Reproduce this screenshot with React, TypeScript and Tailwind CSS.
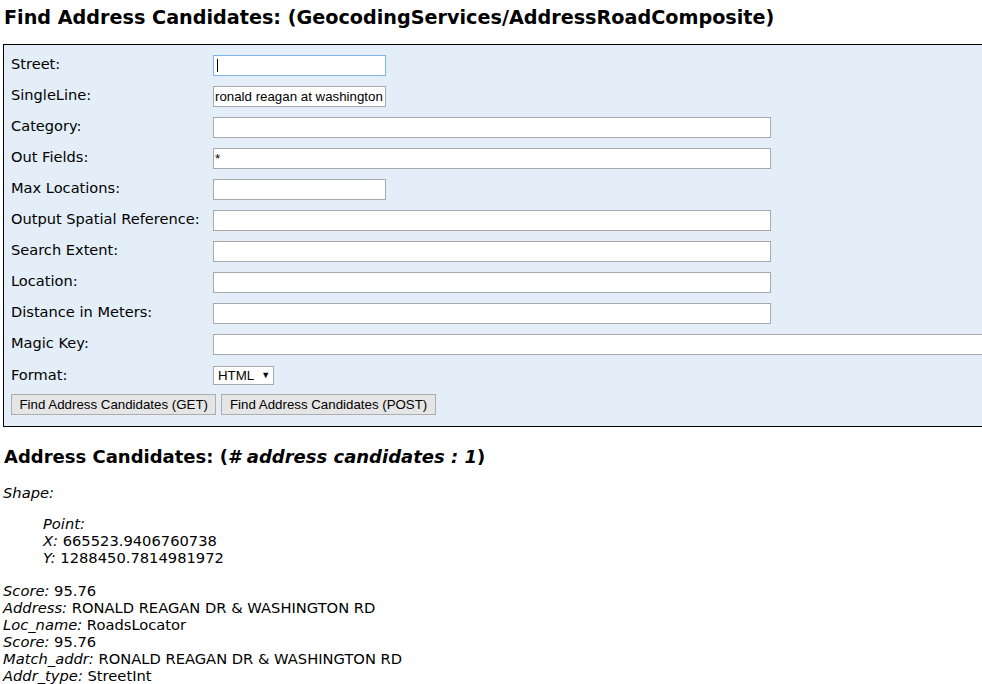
const v = "font-['DejaVu_Sans',Verdana,sans-serif]"
const arial = "font-['Liberation_Sans',Arial,sans-serif]"

type Row = { label: string; value?: string; size: 'short' | 'long' | 'full'; focus?: boolean }

const rows: Row[] = [
  { label: 'Street:', size: 'short', focus: true },
  { label: 'SingleLine:', value: 'ronald reagan at washington', size: 'short' },
  { label: 'Category:', size: 'long' },
  { label: 'Out Fields:', value: '*', size: 'long' },
  { label: 'Max Locations:', size: 'short' },
  { label: 'Output Spatial Reference:', size: 'long' },
  { label: 'Search Extent:', size: 'long' },
  { label: 'Location:', size: 'long' },
  { label: 'Distance in Meters:', size: 'long' },
  { label: 'Magic Key:', size: 'full' },
]

const widths = { short: 'w-[173px]', long: 'w-[558px]', full: 'w-[790px]' }

function Field({ row }: { row: Row }) {
  return (
    <div
      className={`relative h-[21px] ${widths[row.size]} bg-white border ${
        row.focus ? 'border-[#7eb4ea]' : 'border-[#a9a9a9]'
      } ${arial} text-[13.3px] text-black leading-[19px] px-[1px] overflow-hidden whitespace-nowrap`}
    >
      {row.value}
      {row.focus && <span className="absolute left-[3px] top-[3px] w-px h-[13px] bg-black" />}
    </div>
  )
}

export default function App() {
  return (
    <div className={`w-[982px] h-[684px] overflow-hidden bg-white text-black ${v}`}>
      <h2 className="pl-[4px] pt-[6px] text-[19.2px] font-bold leading-[24px]">
        Find Address Candidates: (GeocodingServices/AddressRoadComposite)
      </h2>

      <div className="mt-[14px] ml-[3px] w-[1010px] border border-black bg-[#e3eef8] pt-[5px] pb-[11px] pl-[7px]">
        {rows.map((row) => (
          <div key={row.label} className="flex items-center h-[31px]">
            <div className="w-[202px] text-[14.6px] pb-[3px]">{row.label}</div>
            <Field row={row} />
          </div>
        ))}
        <div className="flex items-center h-[31px]">
          <div className="w-[202px] text-[14.6px] pb-[2px]">Format:</div>
          <div
            className={`h-[19px] w-[61px] bg-white border border-[#a9a9a9] ${arial} text-[13.3px] leading-[17px] pl-[4px] flex items-center gap-[7px]`}
          >
            <span>HTML</span>
            <span className="text-[9px]">▼</span>
          </div>
        </div>
        <div className={`flex gap-[5px] mt-[3px] ${arial} text-[13.3px]`}>
          <div className="h-[21px] px-[7.5px] border border-[#adadad] bg-[#e5e5e5] leading-[19px]">
            Find Address Candidates (GET)
          </div>
          <div className="h-[21px] px-[7.5px] border border-[#adadad] bg-[#e5e5e5] leading-[19px]">
            Find Address Candidates (POST)
          </div>
        </div>
      </div>

      <h2 className="pl-[4px] mt-[18px] text-[18px] font-bold leading-[24px]">
        Address Candidates: (<i># address candidates : 1</i>)
      </h2>

      <div className="pl-[3px] text-[14.7px] leading-[17px]">
        <div className="mt-[15px] italic">Shape:</div>
        <div className="mt-[14px] pl-[40px]">
          <div className="italic">Point:</div>
          <div>
            <i>X:</i> 665523.9406760738
          </div>
          <div>
            <i>Y:</i> 1288450.7814981972
          </div>
        </div>
        <div className="mt-[16px]">
          <div>
            <i>Score:</i> 95.76
          </div>
          <div>
            <i>Address:</i> RONALD REAGAN DR &amp; WASHINGTON RD
          </div>
          <div>
            <i>Loc_name:</i> RoadsLocator
          </div>
          <div>
            <i>Score:</i> 95.76
          </div>
          <div>
            <i>Match_addr:</i> RONALD REAGAN DR &amp; WASHINGTON RD
          </div>
          <div>
            <i>Addr_type:</i> StreetInt
          </div>
        </div>
      </div>
    </div>
  )
}
